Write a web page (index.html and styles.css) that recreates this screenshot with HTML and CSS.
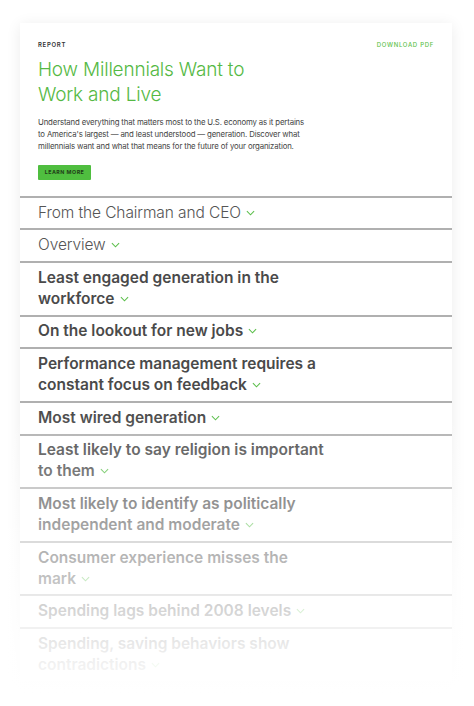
FILE: index.html
```html
<!DOCTYPE html>
<html>
<head>
<meta charset="utf-8">
<link rel="stylesheet" href="styles.css">
</head>
<body>
<div class="page">
  <div class="card">
    <header class="head">
      <div class="topline">
        <span class="eyebrow">Report</span>
        <span class="download">Download PDF</span>
      </div>
      <h1 class="title">How Millennials Want to<br>Work and Live</h1>
      <p class="desc">Understand everything that matters most to the U.S. economy as it pertains<br>to America's largest — and least understood — generation. Discover what<br>millennials want and what that means for the future of your organization.</p>
      <span class="btn">Learn more</span>
    </header>
    <ul class="list">
      <li class="row light">From the Chairman and CEO<svg class="chev" viewBox="0 0 10 6"><path d="M1 1l4 4 4-4"/></svg></li>
      <li class="row light">Overview<svg class="chev" viewBox="0 0 10 6"><path d="M1 1l4 4 4-4"/></svg></li>
      <li class="row">Least engaged generation in the<br>workforce<svg class="chev" viewBox="0 0 10 6"><path d="M1 1l4 4 4-4"/></svg></li>
      <li class="row">On the lookout for new jobs<svg class="chev" viewBox="0 0 10 6"><path d="M1 1l4 4 4-4"/></svg></li>
      <li class="row">Performance management requires a<br>constant focus on feedback<svg class="chev" viewBox="0 0 10 6"><path d="M1 1l4 4 4-4"/></svg></li>
      <li class="row">Most wired generation<svg class="chev" viewBox="0 0 10 6"><path d="M1 1l4 4 4-4"/></svg></li>
      <li class="row">Least likely to say religion is important<br>to them<svg class="chev" viewBox="0 0 10 6"><path d="M1 1l4 4 4-4"/></svg></li>
      <li class="row">Most likely to identify as politically<br>independent and moderate<svg class="chev" viewBox="0 0 10 6"><path d="M1 1l4 4 4-4"/></svg></li>
      <li class="row">Consumer experience misses the<br>mark<svg class="chev" viewBox="0 0 10 6"><path d="M1 1l4 4 4-4"/></svg></li>
      <li class="row">Spending lags behind 2008 levels<svg class="chev" viewBox="0 0 10 6"><path d="M1 1l4 4 4-4"/></svg></li>
      <li class="row">Spending, saving behaviors show<br>contradictions<svg class="chev" viewBox="0 0 10 6"><path d="M1 1l4 4 4-4"/></svg></li>
    </ul>
  </div>
  <div class="fade"></div>
</div>
</body>
</html>
```

FILE: styles.css
```css
html, body {
  margin: 0;
  padding: 0;
  background: #fff;
}
body {
  font-family: Inter, "Liberation Sans", sans-serif;
  width: 474px;
  height: 706px;
  overflow: hidden;
}
.page {
  position: relative;
  height: 706px;
  padding-top: 23px;
  box-sizing: border-box;
}
.card {
  margin: 0 22px 0 20px;
  background: #fff;
  box-shadow: 0 2px 14px rgba(0, 0, 0, 0.08);
}
.head {
  padding: 17px 18px 16px 18px;
}
.topline {
  display: flex;
  justify-content: space-between;
  align-items: center;
  height: 8px;
}
.eyebrow {
  font-size: 6px;
  font-weight: 600;
  letter-spacing: 0.7px;
  text-transform: uppercase;
  color: #333;
}
.download {
  font-size: 6px;
  font-weight: 500;
  letter-spacing: 0.7px;
  text-transform: uppercase;
  color: #5cbf4c;
}
.title {
  margin: 9px 0 0 0;
  font-size: 19px;
  line-height: 25px;
  font-weight: 300;
  color: #55b944;
  letter-spacing: -0.2px;
}
.desc {
  margin: 9px 0 0 0;
  font-size: 7.8px;
  line-height: 12.2px;
  color: #444;
  letter-spacing: -0.15px;
}
.btn {
  display: inline-flex;
  align-items: center;
  justify-content: center;
  margin-top: 12px;
  width: 53px;
  height: 15px;
  background: #4fbe3f;
  border-radius: 1px;
  font-size: 5.3px;
  font-weight: 700;
  letter-spacing: 0.5px;
  text-transform: uppercase;
  color: #1f3d18;
}
.list {
  list-style: none;
  margin: 0;
  padding: 0;
}
.row {
  border-top: 2px solid #b0b0b0;
  padding: 4.9px 18px;
  font-size: 15.5px;
  line-height: 20.9px;
  font-weight: 600;
  color: #4a4a4a;
  letter-spacing: 0;
}
.row.light {
  font-weight: 300;
  color: #555;
  letter-spacing: -0.1px;
}
.chev {
  width: 9px;
  height: 6px;
  margin-left: 5px;
  vertical-align: 2px;
  fill: none;
  stroke: #5cbf4c;
  stroke-width: 1.2;
}
.fade {
  position: absolute;
  left: 0;
  right: 0;
  top: 410px;
  height: 296px;
  background: linear-gradient(to bottom, rgba(255,255,255,0) 0%, rgba(255,255,255,0.5) 40%, rgba(255,255,255,0.9) 82%, #fff 100%);
}
```
